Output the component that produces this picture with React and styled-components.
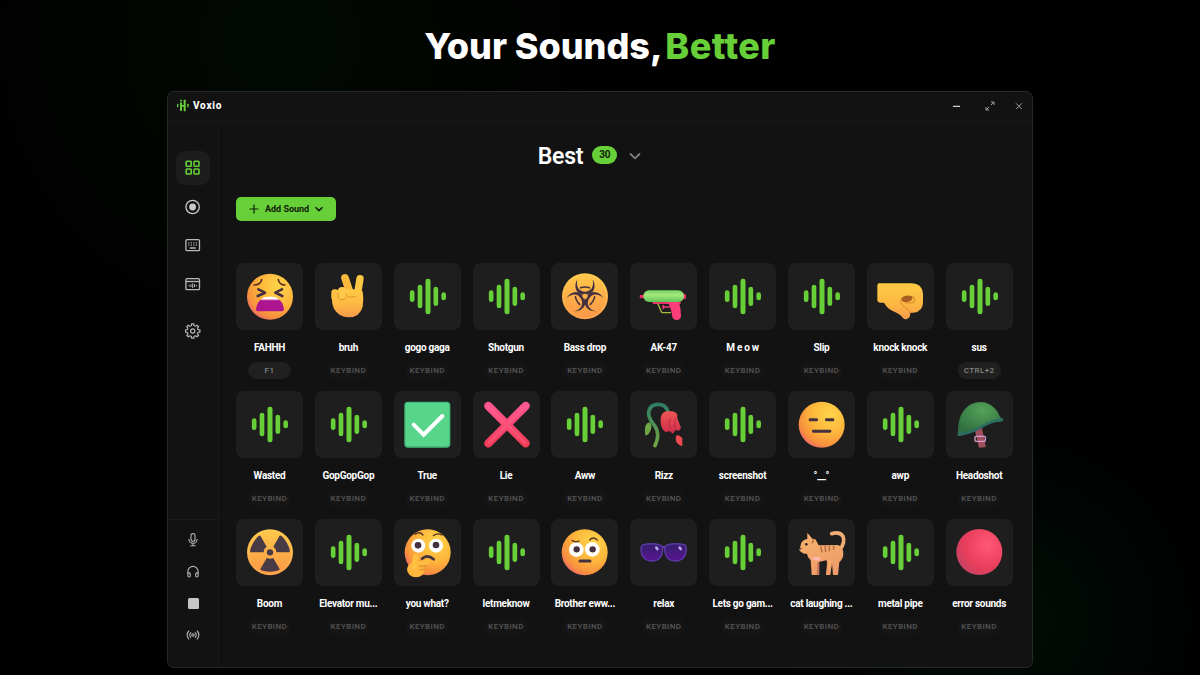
import styled, { createGlobalStyle } from 'styled-components';

const GREEN = '#67cf37';
const INK = '#45303f';

const sounds = [
  { name: 'FAHHH', art: 'anguish', bind: 'F1' },
  { name: 'bruh', art: 'victory' },
  { name: 'gogo gaga' },
  { name: 'Shotgun' },
  { name: 'Bass drop', art: 'biohazard' },
  { name: 'AK-47', art: 'gun' },
  { name: 'M e o w' },
  { name: 'Slip' },
  { name: 'knock knock', art: 'fist' },
  { name: 'sus', bind: 'CTRL+2' },
  { name: 'Wasted' },
  { name: 'GopGopGop' },
  { name: 'True', art: 'check' },
  { name: 'Lie', art: 'cross' },
  { name: 'Aww' },
  { name: 'Rizz', art: 'rose' },
  { name: 'screenshot' },
  { name: '°__°', art: 'blank' },
  { name: 'awp' },
  { name: 'Headoshot', art: 'helmet' },
  { name: 'Boom', art: 'radiation' },
  { name: 'Elevator mu...' },
  { name: 'you what?', art: 'thinking' },
  { name: 'letmeknow' },
  { name: 'Brother eww...', art: 'brow' },
  { name: 'relax', art: 'glasses' },
  { name: 'Lets go gam...' },
  { name: 'cat laughing ...', art: 'cat' },
  { name: 'metal pipe' },
  { name: 'error sounds', art: 'ball' },
];

function App() {
  return (
    <Stage>
      <GlobalStyle />
      <ArtDefs />
      <Headline>
        Your Sounds, <Accent>Better</Accent>
      </Headline>
      <Window>
        <TitleBar>
          <LogoIcon />
          <Brand>Voxio</Brand>
          <WindowControls />
        </TitleBar>
        <Body>
          <Sidebar>
            <Nav>
              <NavButton $active><GridIcon /></NavButton>
              <NavButton><RecordIcon /></NavButton>
              <NavButton><KeyboardIcon /></NavButton>
              <NavButton><PanelIcon /></NavButton>
              <NavButton $spaced><GearIcon /></NavButton>
            </Nav>
            <Devices>
              <DeviceButton><MicIcon /></DeviceButton>
              <DeviceButton><HeadphonesIcon /></DeviceButton>
              <DeviceButton><StopSquare /></DeviceButton>
              <DeviceButton><BroadcastIcon /></DeviceButton>
            </Devices>
          </Sidebar>
          <Main>
            <Category>
              <CategoryName>Best</CategoryName>
              <Count>30</Count>
              <Chevron size={12} width={1.8} color="#808080" />
            </Category>
            <AddButton>
              <PlusIcon />
              <AddText>Add Sound</AddText>
              <Chevron size={8} width={1.5} color="#10200a" />
            </AddButton>
            <SoundGrid>
              {sounds.map((sound) => (
                <Sound key={sound.name}>
                  <Tile>
                    <Art viewBox="0 0 201 201">{art[sound.art] || art.wave}</Art>
                  </Tile>
                  <SoundName>{sound.name}</SoundName>
                  <Keybind $set={Boolean(sound.bind)}>{sound.bind || 'KEYBIND'}</Keybind>
                </Sound>
              ))}
            </SoundGrid>
          </Main>
        </Body>
      </Window>
    </Stage>
  );
}

function LogoIcon() {
  return (
    <svg width="12" height="13" viewBox="0 0 36 39" fill={GREEN}>
      <rect x="0" y="14" width="4" height="11" rx="2" />
      <rect x="9" y="2" width="6" height="5" rx="2" />
      <rect x="9" y="10" width="6" height="26" rx="2" />
      <rect x="10" y="18" width="14" height="5" />
      <rect x="20" y="2" width="6" height="35" rx="2" />
      <rect x="31" y="14" width="4" height="11" rx="2" />
    </svg>
  );
}

function WindowControls() {
  return (
    <Controls>
      <svg width="10" height="10" viewBox="0 0 10 10" stroke="#d0d0d0" strokeWidth="1.2">
        <path d="M1 5.300h7" />
      </svg>
      <ExpandIcon width="10" height="10" viewBox="0 0 10 10" fill="none" stroke="#a0a0a0" strokeWidth="1">
        <path d="M6 1h3v3M9 1 5.800 4.200M4 9H1V6M1 9l3.200-3.200" />
      </ExpandIcon>
      <svg width="10" height="10" viewBox="0 0 10 10" stroke="#a0a0a0" strokeWidth="1">
        <path d="m2 2.300 5.800 5.800M7.800 2.300 2 8.100" />
      </svg>
    </Controls>
  );
}

function GridIcon() {
  return (
    <svg width="16" height="16" viewBox="0 0 16 16" fill="none" stroke={GREEN} strokeWidth="1.6">
      <rect x="1.200" y="1.300" width="5" height="5" rx=".7" />
      <rect x="9" y="1.300" width="5" height="5" rx=".7" />
      <rect x="1.200" y="9" width="5" height="5" rx=".7" />
      <rect x="9" y="9" width="5" height="5" rx=".7" />
    </svg>
  );
}

function RecordIcon() {
  return (
    <svg width="16" height="16" viewBox="0 0 16 16" fill="none" stroke="#c8c8c8" strokeWidth="1.3">
      <circle cx="7.600" cy="8" r="6.700" />
      <circle cx="7.600" cy="8" r="3.400" fill="#c8c8c8" stroke="none" />
    </svg>
  );
}

function KeyboardIcon() {
  return (
    <svg width="16" height="16" viewBox="0 0 16 16" fill="none" stroke="#b9b9b9" strokeWidth="1.3">
      <rect x=".9" y="2.700" width="13.600" height="11" rx="1.200" />
      <path d="M3.300 5.800h9" strokeDasharray="1.1 1.4" />
      <path d="M3.300 8.200h9" strokeDasharray="1.1 1.4" />
      <path d="M4.700 11h6" />
    </svg>
  );
}

function PanelIcon() {
  return (
    <svg width="16" height="16" viewBox="0 0 16 16" fill="none" stroke="#b9b9b9" strokeWidth="1.3">
      <rect x=".9" y="2.700" width="13.600" height="11" rx="1.200" />
      <path d="M1 5.500h13.400" />
      <path d="M4.100 9v1.400M5.900 8.200v3M7.700 7.400V12M9.500 8.200v3M11.300 9v1.400" strokeWidth="1" />
    </svg>
  );
}

function GearIcon() {
  const teeth = [0, 45, 90, 135, 180, 225, 270, 315];
  const points = teeth.flatMap((deg) =>
    [[-22.5, 5.4], [-13, 5.6], [-9, 7.3], [9, 7.3], [13, 5.6]].map(([offset, r]) => {
      const a = ((deg + offset) * Math.PI) / 180;
      return `${(7.7 + r * Math.cos(a)).toFixed(2)},${(8 + r * Math.sin(a)).toFixed(2)}`;
    })
  );
  return (
    <svg width="16" height="16" viewBox="0 0 16 16" fill="none" stroke="#b9b9b9" strokeWidth="1.200" strokeLinejoin="round">
      <polygon points={points.join(' ')} />
      <circle cx="7.700" cy="8" r="2.100" />
    </svg>
  );
}

function MicIcon() {
  return (
    <svg width="14" height="14" viewBox="0 0 14 14" fill="none" stroke="#b4b4b4" strokeWidth="1.1" strokeLinecap="round">
      <rect x="5" y=".6" width="4" height="7.600" rx="2" />
      <path d="M2.900 6.300a4.100 4.100 0 0 0 8.200 0M7 10.500v2.200M4.800 12.800h4.400" />
    </svg>
  );
}

function HeadphonesIcon() {
  return (
    <svg width="14" height="14" viewBox="0 0 14 14" fill="none" stroke="#b4b4b4" strokeWidth="1.1" strokeLinejoin="round">
      <path d="M1.900 8.700V6.500a5.100 5.100 0 0 1 10.200 0v2.200" />
      <path d="M1.900 7.900h1.400q1 0 1 1v2.200q0 .9-.9.9-1.500 0-1.500-1.500zM12.100 7.900h-1.400q-1 0-1 1v2.200q0 .9.9.9 1.500 0 1.500-1.500z" />
    </svg>
  );
}

function BroadcastIcon() {
  return (
    <svg width="14" height="14" viewBox="0 0 14 14" fill="none" stroke="#b4b4b4" strokeWidth="1.1" strokeLinecap="round">
      <circle cx="7" cy="7" r="1.200" />
      <path d="M4.800 4.600a3.300 3.300 0 0 0 0 4.800M9.200 4.600a3.300 3.300 0 0 1 0 4.800M2.800 3a5.700 5.700 0 0 0 0 8M11.200 3a5.700 5.700 0 0 1 0 8" />
    </svg>
  );
}

function PlusIcon() {
  return (
    <svg width="10" height="10" viewBox="0 0 10 10" stroke="#10200a" strokeWidth="1.2">
      <path d="M5 .6v8.800M.6 5h8.800" />
    </svg>
  );
}

function Chevron({ size, width, color }) {
  return (
    <svg width={size} height={size} viewBox="0 0 12 12" fill="none" stroke={color} strokeWidth={(width * 12) / size} strokeLinecap="round" strokeLinejoin="round">
      <path d="m1.500 4 4.500 4.400L10.500 4" />
    </svg>
  );
}

function ArtDefs() {
  return (
    <Defs>
      <defs>
        <radialGradient id="face" cx=".68" cy=".28" r=".85">
          <stop offset="0" stopColor="#ffd54a" />
          <stop offset=".5" stopColor="#fdb53b" />
          <stop offset=".8" stopColor="#f78f3e" />
          <stop offset="1" stopColor="#e9587f" />
        </radialGradient>
        <linearGradient id="badge" x1=".5" y1="0" x2=".5" y2="1">
          <stop offset="0" stopColor="#ffc94a" />
          <stop offset="1" stopColor="#fb9547" />
        </linearGradient>
        <linearGradient id="skin" x1=".5" y1="0" x2=".5" y2="1">
          <stop offset="0" stopColor="#ffcb43" />
          <stop offset=".6" stopColor="#fcb643" />
          <stop offset="1" stopColor="#f79a4c" />
        </linearGradient>
        <linearGradient id="tank" x1=".5" y1="0" x2=".5" y2="1">
          <stop offset="0" stopColor="#74d35e" />
          <stop offset=".4" stopColor="#a6e87e" />
          <stop offset="1" stopColor="#5cc655" />
        </linearGradient>
        <linearGradient id="stem" x1=".5" y1="0" x2=".5" y2="1">
          <stop offset="0" stopColor="#2f7d63" />
          <stop offset="1" stopColor="#6fa544" />
        </linearGradient>
        <linearGradient id="petal" x1=".5" y1="0" x2=".5" y2="1">
          <stop offset="0" stopColor="#ee5654" />
          <stop offset="1" stopColor="#cf2c4a" />
        </linearGradient>
        <linearGradient id="cross" x1=".5" y1="0" x2=".5" y2="1">
          <stop offset="0" stopColor="#ff5590" />
          <stop offset="1" stopColor="#f43c58" />
        </linearGradient>
        <radialGradient id="dome" cx=".55" cy=".25" r=".7">
          <stop offset="0" stopColor="#55a258" />
          <stop offset="1" stopColor="#2f6f41" />
        </radialGradient>
        <radialGradient id="ball" cx=".68" cy=".35" r=".72">
          <stop offset="0" stopColor="#ff5877" />
          <stop offset=".7" stopColor="#e83e5b" />
          <stop offset="1" stopColor="#c84363" />
        </radialGradient>
        <linearGradient id="lens" x1=".5" y1="0" x2=".5" y2="1">
          <stop offset="0" stopColor="#33206b" />
          <stop offset="1" stopColor="#5a1593" />
        </linearGradient>
        <linearGradient id="fur" x1=".3" y1="0" x2=".6" y2="1">
          <stop offset="0" stopColor="#f7b26c" />
          <stop offset="1" stopColor="#ee9a69" />
        </linearGradient>
      </defs>
    </Defs>
  );
}

const art = {
  wave: (
    <g fill={GREEN}>
      <rect x="47.500" y="82" width="14" height="35" rx="7" />
      <rect x="71" y="65" width="14" height="71" rx="7" />
      <rect x="94.500" y="47" width="15" height="107" rx="7" />
      <rect x="118.500" y="71" width="14" height="58" rx="7" />
      <rect x="142" y="88" width="14" height="24" rx="7" />
    </g>
  ),
  anguish: (
    <g fill="none" strokeLinecap="round" strokeLinejoin="round">
      <circle cx="102" cy="101" r="69" fill="url(#face)" />
      <path d="M54 66q20 0 23-16M127 50q3 16 20 16" stroke="#5a3323" strokeWidth="5" />
      <path d="m67 79 20 10-22 10M138 79l-20 10 21 10" stroke={INK} strokeWidth="8" />
      <path d="M78 107q24-9 48 0 14 8 18 30 0 8-9 8H69q-9 0-9-8 4-22 18-30z" fill="#ad158e" />
      <path d="M77 109q4-7 25-7t25 7z" fill="#fff" stroke="#fff" strokeWidth="2" />
    </g>
  ),
  victory: (
    <g strokeLinecap="round">
      <path d="m90 45 17 50" stroke="#f9b83c" strokeWidth="23" />
      <path d="m135 47-8 50" stroke="#ffc545" strokeWidth="22" />
      <path d="M50 96q0-12 12-14l48-4 33 7q4 26 0 46-9 32-42 32-30-1-44-26-7-15-7-41z" fill="url(#skin)" />
      <rect x="49" y="79" width="22" height="33" rx="10" fill="#fdc145" />
      <rect x="69" y="72" width="25" height="37" rx="12" fill="#ffc848" />
      <path d="M70 90v15q5 7 13 5t10-8M93 92q2 12 14 10l14-1" fill="none" stroke="#dd8a2c" strokeWidth="2.500" />
    </g>
  ),
  biohazard: (
    <g>
      <circle cx="102" cy="100" r="69" fill="url(#badge)" />
      <circle cx="102" cy="100" r="65" fill="none" stroke="#ffd968" strokeOpacity=".4" strokeWidth="3" />
      {[0, 120, 240].map((turn) => (
        <g key={turn} transform={`rotate(${turn} 102 100)`}>
          <path d="M79 49C66 72 76 93 97 95v9h10v-9c21-2 31-23 18-46 5 24-6 37-23 37S74 73 79 49z" fill={INK} />
          <path d="M87 75q15-6 30 0" fill="none" stroke={INK} strokeWidth="4.500" />
        </g>
      ))}
      <circle cx="102" cy="100" r="7.500" fill="#fdb045" />
    </g>
  ),
  gun: (
    <g>
      <rect x="29" y="96" width="20" height="10" rx="4" fill="#e8316b" />
      <rect x="150" y="92" width="18" height="17" rx="5" fill="#e8316b" />
      <path d="M64 114h88v9H70z" fill="#e8316b" />
      <path d="m83 121 11 25q1 3 5 3h24" fill="none" stroke="#a8b83a" strokeWidth="4" />
      <path d="M100 126v12m0-6h20" stroke="#ef3a72" strokeWidth="5" />
      <path d="M115 117h32q6 20 6 43-1 11-13 11-10 0-13-9-3-27-12-40z" fill="#fb3d79" />
      <rect x="40" y="82" width="122" height="35" rx="17" fill="url(#tank)" />
    </g>
  ),
  fist: (
    <g>
      <path d="M37 61q-6 0-6 7v44q1 7 10 7h10q8 16 28 26 20 8 28 19 8 8 17 2 8-7 4-17h12q28-3 28-31V92q-2-30-34-31z" fill="url(#skin)" />
      <path d="M103 106q10-12 31-7l3 6q-4 12-22 13-14-3-12-12z" fill="#a95f22" />
      <path d="M103 108q-5 18 12 26 14 8 16 18M135 98q14 8 4 23M115 120q16 2 26-4" fill="none" stroke="#dc8a2e" strokeWidth="3" />
    </g>
  ),
  check: (
    <g>
      <rect x="31" y="32" width="138" height="138" rx="11" fill="#43bd79" />
      <rect x="35" y="36" width="130" height="129" rx="9" fill="#57d68b" />
      <path d="m59 101 30 30 56-56" fill="none" stroke="#fff" strokeWidth="12" strokeLinecap="round" />
    </g>
  ),
  cross: (
    <g strokeLinecap="round">
      <path d="m46 45 112 112M158 45 46 157" stroke="url(#cross)" strokeWidth="25" />
      <path d="m48 47 108 108M156 47 48 155" stroke="#ff6488" strokeOpacity=".4" strokeWidth="10" />
    </g>
  ),
  rose: (
    <g>
      <path d="M46 134q-6-36 12-40 10 8 4 24-5 14-16 16z" fill="#6fa646" />
      <path d="M113 60q-6-21-31-20-27 3-26 30 2 16 18 34 18 26 1 60" fill="none" stroke="url(#stem)" strokeWidth="11" strokeLinecap="round" />
      <path d="M92 94q-3-34 25-34 30 0 25 22l11 28q-4 14-16 6l-8 12-11-8-11 4q-15-12-15-30z" fill="url(#petal)" />
      <path d="M121 82q-8 18 0 32M138 80q-6 14-3 32" fill="none" stroke="#a92343" strokeWidth="2" />
      <path d="M137 139q1-8 9-6l11 8v25q-16-6-19-16z" fill="#f04a50" />
    </g>
  ),
  blank: (
    <g fill={INK}>
      <circle cx="101" cy="101" r="69" fill="url(#face)" />
      <rect x="62" y="82" width="28" height="9" rx="4" />
      <rect x="111" y="82" width="28" height="9" rx="4" />
      <rect x="72" y="116" width="58" height="9" rx="4" />
    </g>
  ),
  helmet: (
    <g>
      <path d="m85 112 22-4 13 60-21 2z" fill="#a14f5e" />
      <rect x="87" y="136" width="31" height="15" rx="3" fill="none" stroke="#d8a0d0" strokeWidth="4" />
      <path d="M36 128q-2-64 38-88 46-20 76 16 8 10 12 22l8 6q2 8-8 8-26 0-54 16-34 18-66 26-8 0-6-6z" fill="url(#dome)" />
      <path d="M38 131q34-4 66-22 32-20 64-23" fill="none" stroke="#2c6c63" strokeWidth="8" strokeLinecap="round" />
    </g>
  ),
  radiation: (
    <g>
      <circle cx="102" cy="100" r="69" fill="url(#badge)" />
      <circle cx="102" cy="100" r="65" fill="none" stroke="#ffd968" strokeOpacity=".4" strokeWidth="3" />
      {[0, 120, 240].map((turn) => (
        <path
          key={turn}
          transform={`rotate(${turn} 102 100)`}
          d="M92.500 117 73 150q0 7 29 8 29-1 29-8l-19.500-33q-9.500 5-19 0z"
          fill="#493b46"
        />
      ))}
      <circle cx="102" cy="100" r="9.500" fill="#493b46" />
    </g>
  ),
  thinking: (
    <g fill="none" strokeLinecap="round">
      <circle cx="101" cy="100" r="69" fill="url(#face)" />
      <circle cx="73" cy="80" r="21" fill="#fff" />
      <circle cx="126" cy="80" r="21" fill="#fff" />
      <circle cx="72" cy="79" r="10" fill={INK} />
      <circle cx="126" cy="78" r="10" fill={INK} />
      <path d="M63 46q14-10 24 2M118 50q12-10 25-2" stroke="#5a3323" strokeWidth="4" />
      <path d="M84 119q16-15 35 2" stroke={INK} strokeWidth="8" />
      <ellipse cx="66" cy="151" rx="27" ry="24" fill="#fdb53c" />
      <path d="m65 114-4 30" stroke="#ffc043" strokeWidth="17" />
      <path d="m68 134 34-4" stroke="#fdbd42" strokeWidth="12" />
      <path d="M76 141h20M78 152h16" stroke="#dd8932" strokeWidth="3" />
    </g>
  ),
  brow: (
    <g fill="none" strokeLinecap="round">
      <circle cx="101" cy="100" r="69" fill="url(#face)" />
      <circle cx="76" cy="92" r="22" fill="#fff" />
      <circle cx="124" cy="91" r="22" fill="#fff" />
      <circle cx="77" cy="91" r="9.500" fill={INK} />
      <circle cx="125" cy="91" r="9.500" fill={INK} />
      <path d="M63 64q10 8 21 2M116 63q10-12 23 0" stroke="#5a3323" strokeWidth="4" />
      <path d="M87 126h30" stroke={INK} strokeWidth="9" />
    </g>
  ),
  glasses: (
    <g stroke="#5c3ba6" strokeWidth="4">
      <path d="M92 86q9-5 18 0" fill="none" strokeWidth="7" />
      <path d="M40 77q22-5 45-1 13 2 13 15-2 35-31 35-33 0-34-36 0-11 7-13z" fill="url(#lens)" />
      <path d="M117 76q23-4 45 1 7 2 7 13-1 36-34 36-29 0-31-35 0-13 13-15z" fill="url(#lens)" />
      <path d="m79 86 3 4M149 86l3 4" stroke="#b8a5ee" strokeWidth="8" strokeLinecap="round" />
    </g>
  ),
  cat: (
    <g>
      <path d="M156 92q16-22 9-40-10-16-34-8" fill="none" stroke="#f0ae74" strokeWidth="11" strokeLinecap="round" />
      <path d="M94 120v48H83V132M117 124l-2 44h10l9-38" fill="#c9785a" />
      <path d="M58 60V41l15 18 9 2q6 10 10 18l58-1q17 6 16 28-1 14-12 24l-4 38h-15l-3-36-12 2-5-10-27 6-2 38H71l-3-44q-10-8-11-20-10 2-16-4-10-5-5-12l3-14q5-12 19-14z" fill="url(#fur)" />
      <path d="m119 128 13-4-5 44h-13z" fill="url(#fur)" />
      <path d="M70 118q20 14 30 2-12-12-30-2z" fill="#ffb5ae" />
      <path d="m98 82 4 18M111 80l2 19M124 80v17M137 80v13M76 62l-3 12" stroke="#b06f46" strokeWidth="4.500" />
      <circle cx="55" cy="76" r="4" fill="#38272b" />
      <path d="m35 88 7-1-4 6z" fill="#6f3c35" />
    </g>
  ),
  ball: <circle cx="100" cy="99" r="69" fill="url(#ball)" />,
};

const GlobalStyle = createGlobalStyle`
  * {
    box-sizing: border-box;
  }

  body {
    margin: 0;
    background: #000;
    overflow: hidden;
  }

  svg {
    display: block;
    flex-shrink: 0;
  }
`;

const Stage = styled.div`
  display: flex;
  flex-direction: column;
  align-items: center;
  height: 675px;
  font-family: Roboto, 'Liberation Sans', sans-serif;
  color: #fff;
  background:
    radial-gradient(circle at 280px 40px, #020902 0, rgba(0, 0, 0, 0) 330px),
    radial-gradient(circle at 1010px 620px, #010c06 0, rgba(0, 0, 0, 0) 220px),
    #000;
`;

const Defs = styled.svg`
  width: 0;
  height: 0;
`;

const Headline = styled.h1`
  margin: 0;
  height: 91px;
  padding-top: 1px;
  font-family: Inter, sans-serif;
  font-size: 36px;
  font-weight: 800;
  line-height: 91px;
  letter-spacing: -0.05px;
  white-space: nowrap;
`;

const Accent = styled.span`
  margin-left: -3.5px;
  color: ${GREEN};
  letter-spacing: 0.4px;
`;

const Window = styled.div`
  display: flex;
  flex-direction: column;
  width: 866px;
  height: 577px;
  background: #121212;
  border: 1px solid #272927;
  border-radius: 7px;
  overflow: hidden;
`;

const TitleBar = styled.div`
  display: flex;
  align-items: center;
  height: 30px;
  padding: 0 8px 2px 9px;
  border-bottom: 1px solid #191919;
`;

const Brand = styled.span`
  margin-left: 4px;
  font-size: 10px;
  font-weight: 800;
  letter-spacing: 0.75px;
`;

const Controls = styled.div`
  display: flex;
  flex: 1;
  justify-content: flex-end;
`;

const ExpandIcon = styled.svg`
  margin: 0 19px 0 23px;
`;

const Body = styled.div`
  display: flex;
  flex: 1;
  min-height: 0;
`;

const Sidebar = styled.div`
  display: flex;
  flex-direction: column;
  justify-content: space-between;
  width: 51px;
  border-right: 1px solid #181818;
`;

const Nav = styled.div`
  display: flex;
  flex-direction: column;
  align-items: center;
  gap: 4.7px;
  padding-top: 29px;
`;

const NavButton = styled.div`
  display: flex;
  align-items: center;
  justify-content: center;
  width: 34px;
  height: 34px;
  margin-top: ${(p) => (p.$spaced ? '8px' : '0')};
  border-radius: 9px;
  background: ${(p) => (p.$active ? '#1d1d1d' : 'transparent')};
`;

const Devices = styled.div`
  display: flex;
  flex-direction: column;
  align-items: center;
  height: 148px;
  padding-top: 4px;
  border-top: 1px solid #1b1b1b;
`;

const DeviceButton = styled.div`
  display: flex;
  align-items: center;
  justify-content: center;
  height: 31.7px;
`;

const StopSquare = styled.div`
  width: 11px;
  height: 11px;
  border-radius: 1.5px;
  background: #c6c6c6;
`;

const Main = styled.div`
  display: flex;
  flex: 1;
  flex-direction: column;
  align-items: flex-start;
  padding: 21px 19px 0 17px;
`;

const Category = styled.div`
  display: flex;
  align-items: center;
  align-self: center;
  height: 26px;
  margin-right: 70px;
`;

const CategoryName = styled.h2`
  margin: 0;
  font-size: 23px;
  font-weight: 600;
  letter-spacing: -0.2px;
`;

const Count = styled.span`
  width: 25px;
  height: 18px;
  margin: 0 12px 2px 9px;
  border-radius: 9px;
  background: ${GREEN};
  color: #10200a;
  font-size: 10px;
  font-weight: 700;
  line-height: 18px;
  letter-spacing: -0.2px;
  text-align: center;
`;

const AddButton = styled.div`
  display: flex;
  align-items: center;
  width: 100px;
  height: 24px;
  margin-top: 28px;
  padding-left: 13px;
  border-radius: 5px;
  background: ${GREEN};
`;

const AddText = styled.span`
  margin: 0 6px 0 6px;
  color: #10200a;
  font-size: 9px;
  font-weight: 700;
  white-space: nowrap;
`;

const SoundGrid = styled.div`
  display: grid;
  grid-template-columns: repeat(10, 67px);
  grid-auto-rows: 128px;
  justify-content: space-between;
  width: 776.6px;
  margin-top: 42px;
`;

const Sound = styled.div`
  display: flex;
  flex-direction: column;
  align-items: center;
`;

const Tile = styled.div`
  width: 67px;
  height: 67px;
  border-radius: 8px;
  background: #1e1e1e;
`;

const Art = styled.svg`
  width: 67px;
  height: 67px;
`;

const SoundName = styled.div`
  margin-top: 11px;
  font-size: 10px;
  font-weight: 700;
  line-height: 13px;
  letter-spacing: -0.27px;
  white-space: nowrap;
`;

const Keybind = styled.div`
  min-width: 43px;
  height: 17px;
  margin-top: 8px;
  padding: 0 4px;
  border-radius: 9px;
  background: ${(p) => (p.$set ? '#202020' : '#151515')};
  color: ${(p) => (p.$set ? '#858585' : '#575757')};
  font-size: 8px;
  font-weight: 500;
  line-height: 17px;
  letter-spacing: 0.4px;
  text-align: center;
`;

export default App;
